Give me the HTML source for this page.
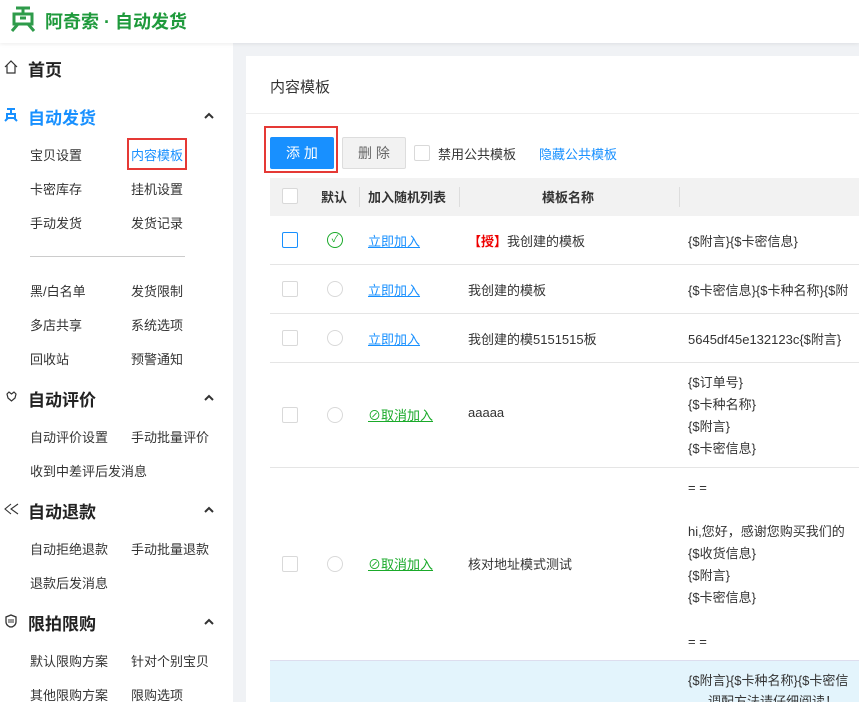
<!DOCTYPE html>
<html><head><meta charset="utf-8"><style>
*{margin:0;padding:0;box-sizing:border-box}
html,body{width:859px;height:702px;overflow:hidden}
body{background:#f0f2f5;font-family:"Liberation Sans","Noto Sans CJK SC",sans-serif;color:#333;position:relative}
.a{position:absolute;white-space:nowrap}
.hd{left:0;top:0;width:859px;height:43px;background:#fff;box-shadow:0 1px 4px rgba(0,0,0,.08);z-index:2}
.sb{left:0;top:43px;width:233px;height:659px;background:#fff}
.s{font-size:13px;color:#333}
.h{font-size:17px;color:#222;font-weight:bold}
.ic{position:absolute}
.car{left:204px}
.card{left:246px;top:56px;width:613px;height:646px;background:#fff}
.t{font-size:13px;color:#333}
.lk{color:#1890ff;text-decoration:underline;font-size:13px}
.gk{color:#1aaa2a;text-decoration:underline;font-size:13px}
.cb{width:16px;height:16px;border:1px solid #d9d9d9;border-radius:2px;background:#fff}
.rd{width:16px;height:16px;border:1px solid #d9d9d9;border-radius:50%}
.ln{height:1px;background:#e5e5e5;left:270px;width:589px}
</style></head><body>
<div class="a hd">
<svg class="a" style="left:9px;top:5px" width="28" height="30" viewBox="0 0 28 30"><path d="M7 3h14M14 3v5M5 9h18v10H5z M9 19l-6 7M19 19l6 7M11 13h6" stroke="#2e9b4a" stroke-width="3" fill="none"/></svg>
<div class="a" style="left:45px;top:8px;font-size:18px;font-weight:bold;color:#1f9a3c">阿奇索 · 自动发货</div>
</div>
<div class="a sb"></div>
<svg class="ic" style="left:4px;top:60px" width="14" height="14" viewBox="0 0 14 14"><path d="M1 7L7 1l6 6M3 5v8h8V5" fill="none" stroke="#333" stroke-width="1.2"/></svg>
<div class="a h" style="left:28px;top:56px">首页</div>
<svg class="ic" style="left:3px;top:107px" width="16" height="16" viewBox="0 0 16 16"><path d="M4 2h8M8 2v4M4 7h8v4H4zM5 11l-3 3M11 11l3 3" fill="none" stroke="#1890ff" stroke-width="2"/></svg>
<div class="a h" style="left:28px;top:104px;color:#1890ff">自动发货</div>
<svg class="ic car" style="top:112px" width="10" height="7" viewBox="0 0 10 7"><path d="M1 6l4-4 4 4" fill="none" stroke="#333" stroke-width="2"/></svg>
<div class="a s" style="left:30px;top:145px">宝贝设置</div>
<div class="a s" style="left:131px;top:145px;color:#1890ff">内容模板</div>
<div class="a" style="left:127px;top:138px;width:60px;height:32px;border:2px solid #e53935"></div>
<div class="a s" style="left:30px;top:179px">卡密库存</div><div class="a s" style="left:131px;top:179px">挂机设置</div>
<div class="a s" style="left:30px;top:213px">手动发货</div><div class="a s" style="left:131px;top:213px">发货记录</div>
<div class="a" style="left:30px;top:256px;width:155px;height:1px;background:#ccc"></div>
<div class="a s" style="left:30px;top:281px">黑/白名单</div><div class="a s" style="left:131px;top:281px">发货限制</div>
<div class="a s" style="left:30px;top:315px">多店共享</div><div class="a s" style="left:131px;top:315px">系统选项</div>
<div class="a s" style="left:30px;top:349px">回收站</div><div class="a s" style="left:131px;top:349px">预警通知</div>
<svg class="ic" style="left:5px;top:390px" width="13" height="13" viewBox="0 0 13 13"><path d="M2 4l2-2 2.5 2L9 2l2 2-1 4-3.5 3L3 8z" fill="none" stroke="#333" stroke-width="1.2"/></svg>
<div class="a h" style="left:28px;top:386px">自动评价</div>
<svg class="ic car" style="top:394px" width="10" height="7" viewBox="0 0 10 7"><path d="M1 6l4-4 4 4" fill="none" stroke="#333" stroke-width="2"/></svg>
<div class="a s" style="left:30px;top:427px">自动评价设置</div><div class="a s" style="left:131px;top:427px">手动批量评价</div>
<div class="a s" style="left:30px;top:461px">收到中差评后发消息</div>
<svg class="ic" style="left:3px;top:503px" width="16" height="12" viewBox="0 0 16 12"><path d="M8 1L2 6l6 5M15 1L8 6l7 5" fill="none" stroke="#333" stroke-width="1.1"/></svg>
<div class="a h" style="left:28px;top:498px">自动退款</div>
<svg class="ic car" style="top:506px" width="10" height="7" viewBox="0 0 10 7"><path d="M1 6l4-4 4 4" fill="none" stroke="#333" stroke-width="2"/></svg>
<div class="a s" style="left:30px;top:539px">自动拒绝退款</div><div class="a s" style="left:131px;top:539px">手动批量退款</div>
<div class="a s" style="left:30px;top:573px">退款后发消息</div>
<svg class="ic" style="left:5px;top:614px" width="12" height="14" viewBox="0 0 12 14"><path d="M6 1l5 2v5c0 3-3 5-5 5S1 11 1 8V3z" fill="none" stroke="#333" stroke-width="1.3"/><path d="M4 5v4M6 5v4M8 5v4" stroke="#333"/></svg>
<div class="a h" style="left:28px;top:610px">限拍限购</div>
<svg class="ic car" style="top:618px" width="10" height="7" viewBox="0 0 10 7"><path d="M1 6l4-4 4 4" fill="none" stroke="#333" stroke-width="2"/></svg>
<div class="a s" style="left:30px;top:651px">默认限购方案</div><div class="a s" style="left:131px;top:651px">针对个别宝贝</div>
<div class="a s" style="left:30px;top:685px">其他限购方案</div><div class="a s" style="left:131px;top:685px">限购选项</div>

<div class="a card"></div>
<div class="a" style="left:270px;top:76px;font-size:15px;color:#333">内容模板</div>
<div class="a" style="left:246px;top:113px;width:613px;height:1px;background:#eee"></div>
<div class="a" style="left:264px;top:126px;width:74px;height:47px;border:2px solid #e53935"></div>
<div class="a" style="left:270px;top:137px;width:64px;height:32px;background:#1890ff;border-radius:2px;color:#fff;font-size:14px;text-align:center;line-height:32px">添 加</div>
<div class="a" style="left:342px;top:137px;width:64px;height:32px;background:#f2f2f2;border:1px solid #ddd;border-radius:2px;color:#666;font-size:14px;text-align:center;line-height:30px">删 除</div>
<div class="a cb" style="left:414px;top:145px"></div>
<div class="a t" style="left:438px;top:144px">禁用公共模板</div>
<div class="a t" style="left:539px;top:144px;color:#1890ff">隐藏公共模板</div>
<div class="a" style="left:270px;top:178px;width:589px;height:38px;background:#f2f2f2"></div>
<div class="a cb" style="left:282px;top:188px"></div>
<div class="a t" style="left:321px;top:187px;font-weight:bold">默认</div>
<div class="a" style="left:359px;top:187px;width:1px;height:20px;background:#ddd"></div>
<div class="a t" style="left:368px;top:187px;font-weight:bold">加入随机列表</div>
<div class="a" style="left:459px;top:187px;width:1px;height:20px;background:#ddd"></div>
<div class="a t" style="left:542px;top:187px;font-weight:bold">模板名称</div>
<div class="a" style="left:679px;top:187px;width:1px;height:20px;background:#ddd"></div>

<div class="a cb" style="left:282px;top:232px;border-color:#1890ff"></div>
<div class="a rd" style="left:327px;top:232px;border-color:#1aaa2a;color:#1aaa2a;font-size:10px;line-height:14px;text-align:center">✓</div>
<div class="a lk" style="left:368px;top:231px">立即加入</div>
<div class="a t" style="left:468px;top:231px"><span style="color:#e00;font-weight:bold">【授】</span>我创建的模板</div>
<div class="a t" style="left:688px;top:231px">{$附言}{$卡密信息}</div>
<div class="a ln" style="top:264px"></div>
<div class="a cb" style="left:282px;top:281px"></div><div class="a rd" style="left:327px;top:281px"></div>
<div class="a lk" style="left:368px;top:280px">立即加入</div>
<div class="a t" style="left:468px;top:280px">我创建的模板</div>
<div class="a t" style="left:688px;top:280px">{$卡密信息}{$卡种名称}{$附</div>
<div class="a ln" style="top:313px"></div>
<div class="a cb" style="left:282px;top:330px"></div><div class="a rd" style="left:327px;top:330px"></div>
<div class="a lk" style="left:368px;top:329px">立即加入</div>
<div class="a t" style="left:468px;top:329px">我创建的模5151515板</div>
<div class="a t" style="left:688px;top:329px">5645df45e132123c{$附言}</div>
<div class="a ln" style="top:362px"></div>
<div class="a cb" style="left:282px;top:407px"></div><div class="a rd" style="left:327px;top:407px"></div>
<div class="a gk" style="left:368px;top:405px">⊘取消加入</div>
<div class="a t" style="left:468px;top:405px">aaaaa</div>
<div class="a t" style="left:688px;top:372px;line-height:22px">{$订单号}<br>{$卡种名称}<br>{$附言}<br>{$卡密信息}</div>
<div class="a ln" style="top:467px"></div>
<div class="a cb" style="left:282px;top:556px"></div><div class="a rd" style="left:327px;top:556px"></div>
<div class="a gk" style="left:368px;top:554px">⊘取消加入</div>
<div class="a t" style="left:468px;top:554px">核对地址模式测试</div>
<div class="a t" style="left:688px;top:477px;line-height:22px">= =<br><br>hi,您好，感谢您购买我们的<br>{$收货信息}<br>{$附言}<br>{$卡密信息}<br><br>= =</div>
<div class="a" style="left:270px;top:660px;width:589px;height:42px;background:#e3f4fc;border-top:1px solid #dde"></div>
<div class="a t" style="left:688px;top:670px">{$附言}{$卡种名称}{$卡密信</div>
<div class="a t" style="left:708px;top:691px">调配方法请仔细阅读！</div>
</body></html>
